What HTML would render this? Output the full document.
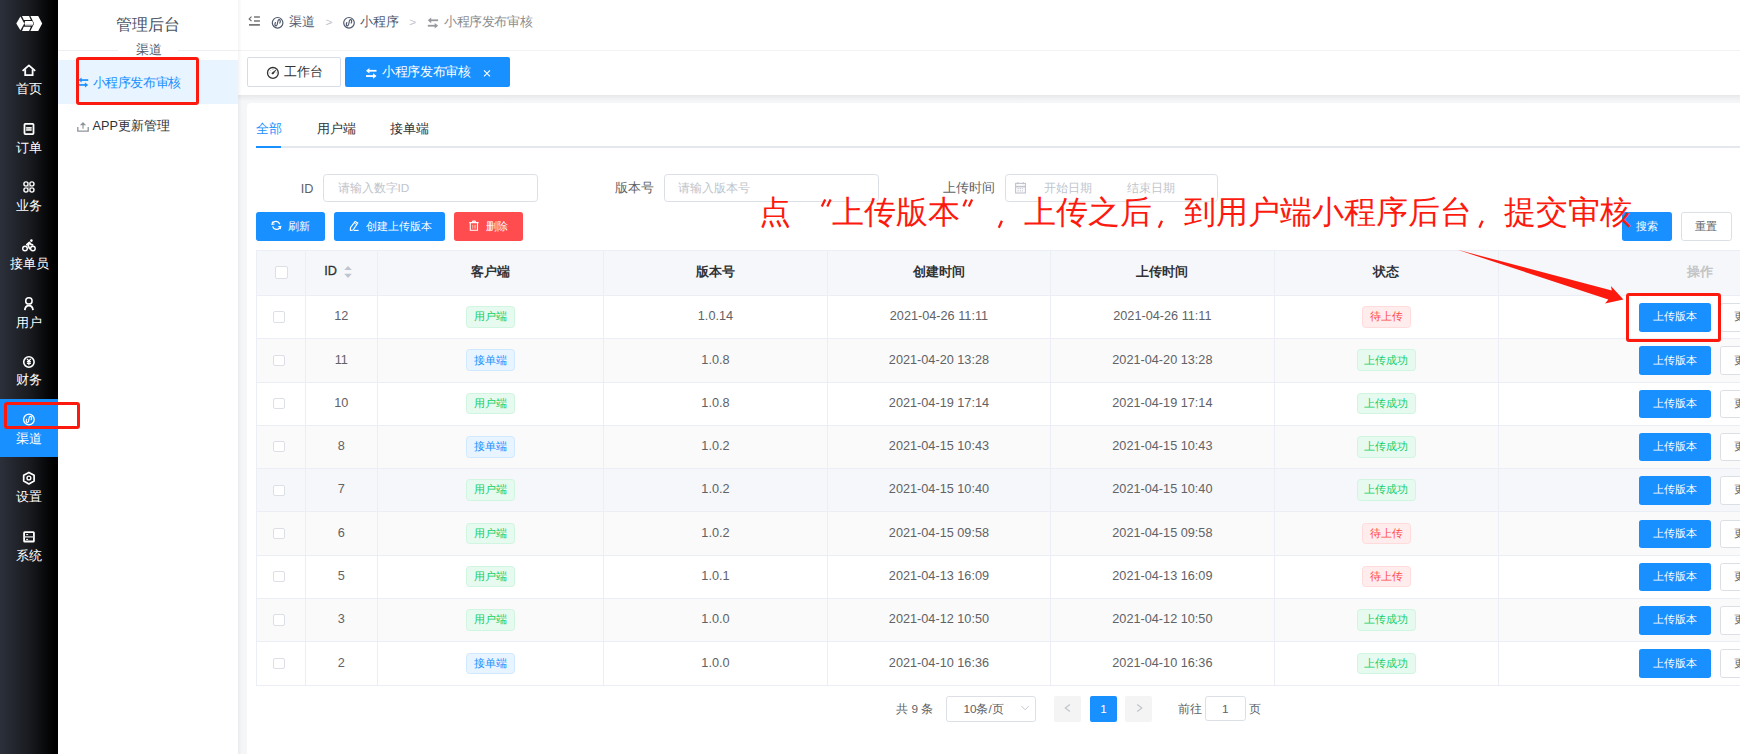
<!DOCTYPE html><html><head><meta charset="utf-8"><style>
html,body{margin:0;padding:0;}
body{width:1740px;height:754px;overflow:hidden;position:relative;background:#f5f6f8;font-family:"Liberation Sans",sans-serif;}
.t{position:absolute;white-space:nowrap;line-height:1;}
.r{position:absolute;box-sizing:border-box;}
.s{position:absolute;overflow:visible;}
</style></head><body>
<div class="r" style="left:238px;top:0px;width:1502px;height:95px;background:#fff;"></div>
<div class="r" style="left:238px;top:50px;width:1502px;height:1px;background:#f3f3f3;"></div>
<div class="r" style="left:238px;top:95px;width:1502px;height:6px;background:linear-gradient(#e6e8ea,#f5f6f8);"></div>
<div class="r" style="left:247px;top:103px;width:1500px;height:660px;background:#fff;border-radius:4px;"></div>
<div class="r" style="left:0px;top:0px;width:58px;height:754px;background:linear-gradient(90deg,#2c303a 0%,#1a1c21 48%,#000 93%,#000 100%);"></div>
<div class="r" style="left:0px;top:399px;width:58px;height:58px;background:#1890ff;"></div>
<svg class="s" style="left:0px;top:0px" width="58" height="50" viewBox="0 0 58 50"><g fill="#fff"><path d="M16.3 23.4 L20.4 16.6 L24.3 23.4 L20.4 30.2 Z"/><path d="M22 15.9 L29.1 15.9 L30.8 20.1 L23.8 20.1 Z"/><path d="M25.1 21.1 L32.3 21.1 L33.4 23.4 L32.3 25.5 L25.1 25.5 L24.6 23.4 Z" fill="#fff"/><path d="M25.3 25 H32.3" stroke="#999" stroke-width="0.8"/><path d="M23.8 26.7 L30.8 26.7 L29.1 30.9 L22 30.9 Z"/><path d="M30.4 15.9 L38.2 15.9 L42.2 23.4 L38.2 30.9 L30.4 30.9 L34.1 23.4 Z"/></g></svg>
<div class="t" style="left:-121px;width:300px;text-align:center;top:82.7px;font-size:12.7px;color:#fff;font-weight:400;">首页</div>
<div class="t" style="left:-121px;width:300px;text-align:center;top:141.89999999999998px;font-size:12.7px;color:#fff;font-weight:400;">订单</div>
<div class="t" style="left:-121px;width:300px;text-align:center;top:200.29999999999998px;font-size:12.7px;color:#fff;font-weight:400;">业务</div>
<div class="t" style="left:-121px;width:300px;text-align:center;top:257.7px;font-size:12.7px;color:#fff;font-weight:400;">接单员</div>
<div class="t" style="left:-121px;width:300px;text-align:center;top:316.7px;font-size:12.7px;color:#fff;font-weight:400;">用户</div>
<div class="t" style="left:-121px;width:300px;text-align:center;top:373.7px;font-size:12.7px;color:#fff;font-weight:400;">财务</div>
<div class="t" style="left:-121px;width:300px;text-align:center;top:432.7px;font-size:12.7px;color:#fff;font-weight:400;">渠道</div>
<div class="t" style="left:-121px;width:300px;text-align:center;top:491.09999999999997px;font-size:12.7px;color:#fff;font-weight:400;">设置</div>
<div class="t" style="left:-121px;width:300px;text-align:center;top:549.7px;font-size:12.7px;color:#fff;font-weight:400;">系统</div>
<svg class="s" style="left:0px;top:50px" width="58" height="520" viewBox="0 50 58 520"><path d="M22.6 70.9 L28.9 65.4 L35.2 70.9" stroke="#fff" fill="none" stroke-width="1.8" stroke-linejoin="round"/><path d="M25.2 69.2 V75.1 H32.6 V69.2" stroke="#fff" fill="none" stroke-width="1.8"/><rect x="24.5" y="123.8" width="9" height="10.3" rx="0.8" stroke="#fff" fill="none" stroke-width="1.8"/><rect x="26.2" y="127.2" width="5.4" height="3.4" fill="#bbb"/><path d="M26.2 127.7 H31.6 M26.2 130.1 H31.6" stroke="#fff" stroke-width="1"/><circle cx="26" cy="184" r="2.1" stroke="#fff" fill="none" stroke-width="1.4"/><circle cx="26" cy="190" r="2.1" stroke="#fff" fill="none" stroke-width="1.4"/><circle cx="31.9" cy="184" r="2.1" stroke="#fff" fill="none" stroke-width="1.4"/><circle cx="31.9" cy="190" r="2.1" stroke="#fff" fill="none" stroke-width="1.4"/><path d="M28.95 183 V191 M25 187 H33" stroke="#999" stroke-width="0.8"/><circle cx="25" cy="248.5" r="2.3" stroke="#fff" fill="none" stroke-width="1.4"/><circle cx="32.9" cy="248.5" r="2.3" stroke="#fff" fill="none" stroke-width="1.4"/><circle cx="31.4" cy="240.6" r="1.3" fill="#fff"/><path d="M26.8 244.6 L29.3 242.4 L31 244.4 L32.6 244.9 M29.3 242.6 L28.2 245.6 L29.6 248.6" stroke="#fff" fill="none" stroke-width="1.7" stroke-linejoin="round" stroke-linecap="round"/><circle cx="28.9" cy="300.9" r="3.2" stroke="#fff" fill="none" stroke-width="1.5"/><path d="M24.8 310.2 C25.1 307 26.9 305.7 28.9 305.7 C30.9 305.7 32.7 307 33 310.2" stroke="#fff" fill="none" stroke-width="1.8"/><circle cx="28.9" cy="362" r="5.2" stroke="#fff" fill="none" stroke-width="1.6"/><path d="M27 358.9 L28.9 361 L30.8 358.9 M26.9 361.6 H30.9 M26.9 363.4 H30.9 M28.9 361 V365.3" stroke="#fff" fill="none" stroke-width="1.2"/><circle cx="28.9" cy="419.5" r="5.3" stroke="#fff" fill="none" stroke-width="1.3"/><path d="M26.70 419.30 C25.70 421.10 26.30 422.80 27.60 422.60 C28.50 422.40 28.70 421.30 28.90 419.50 C29.10 417.70 29.30 416.60 30.20 416.40 C31.50 416.20 32.10 417.90 31.10 419.70" stroke="#fff" fill="none" stroke-width="1.2" stroke-linecap="round"/><path d="M28.9 472.4 L34.1 475.3 L34.1 481.1 L28.9 484 L23.7 481.1 L23.7 475.3 Z" stroke="#fff" fill="none" stroke-width="1.7" stroke-linejoin="round"/><circle cx="28.9" cy="478" r="1.9" stroke="#fff" fill="none" stroke-width="1.4"/><rect x="24.1" y="532.1" width="9.8" height="9.4" rx="0.6" stroke="#fff" fill="none" stroke-width="1.8"/><path d="M24.1 536.9 H33.9" stroke="#ddd" stroke-width="1.3"/><path d="M26.2 534.6 H28.1 M26.2 539.4 H28.1" stroke="#fff" stroke-width="1"/></svg>
<div class="r" style="left:58px;top:0px;width:180px;height:754px;background:#fff;"></div>
<div class="r" style="left:238px;top:0px;width:4px;height:754px;background:linear-gradient(90deg,rgba(0,0,0,0.045),rgba(0,0,0,0));"></div>
<div class="t" style="left:-1.6999999999999886px;width:300px;text-align:center;top:16.3px;font-size:16.3px;color:#4a5262;font-weight:400;">管理后台</div>
<div class="r" style="left:58px;top:50px;width:60px;height:1px;background:#eceef1;"></div>
<div class="r" style="left:178px;top:50px;width:60px;height:1px;background:#eceef1;"></div>
<div class="t" style="left:-1.1999999999999886px;width:300px;text-align:center;top:43.8px;font-size:12.7px;color:#515a6e;font-weight:400;">渠道</div>
<div class="r" style="left:58px;top:60px;width:180px;height:44px;background:#e8f4ff;"></div>
<svg class="s" style="left:58px;top:60px" width="180" height="44" viewBox="58 60 180 44"><path d="M88.2 80.054 H79.60000000000001" stroke="#1890ff" stroke-width="1.7"/><path d="M78.4 80.054 L81.634 77.504 V82.604 Z" fill="#1890ff"/><path d="M78.4 84.95 H87.0" stroke="#1890ff" stroke-width="1.7"/><path d="M88.2 84.95 L84.96600000000001 82.4 V87.5 Z" fill="#1890ff"/></svg>
<div class="t" style="left:92.7px;top:77.0px;font-size:12.7px;color:#1890ff;font-weight:400;letter-spacing:-0.4px;">小程序发布审核</div>
<svg class="s" style="left:70px;top:110px" width="30" height="30" viewBox="70 110 30 30"><path d="M77.8 127 V131.1 H88.2 V127" stroke="#8f939b" fill="none" stroke-width="1.3"/><path d="M83 128.8 V124.8" stroke="#a8abb2" stroke-width="1.5"/><path d="M79.9 125.3 L83 122 L86.1 125.3 Z" fill="#8f939b"/></svg>
<div class="t" style="left:92.6px;top:120.0px;font-size:12.7px;color:#303133;font-weight:400;">APP更新管理</div>
<svg class="s" style="left:244px;top:10px" width="20" height="20" viewBox="244 10 20 20"><path d="M251.5 16.6 L249.2 18.9 L251.5 21.2" stroke="#6a6a6a" fill="none" stroke-width="1.2"/><path d="M254 17 H259.9 M254 21 H259.9 M249 24.9 H259.9" stroke="#777" stroke-width="1.7"/></svg>
<svg class="s" style="left:260px;top:10px" width="100" height="20" viewBox="260 10 100 20"><circle cx="277.6" cy="22.8" r="5.3" stroke="#515a6e" fill="none" stroke-width="1.2"/><path d="M275.40000000000003 22.6 C274.40000000000003 24.400000000000002 275.0 26.1 276.3 25.900000000000002 C277.20000000000005 25.7 277.40000000000003 24.6 277.6 22.8 C277.8 21.0 278.0 19.900000000000002 278.90000000000003 19.7 C280.20000000000005 19.5 280.8 21.2 279.8 23.0" stroke="#515a6e" fill="none" stroke-width="1.2" stroke-linecap="round"/><circle cx="349" cy="22.8" r="5.3" stroke="#515a6e" fill="none" stroke-width="1.2"/><path d="M346.8 22.6 C345.8 24.400000000000002 346.4 26.1 347.7 25.900000000000002 C348.6 25.7 348.8 24.6 349 22.8 C349.2 21.0 349.4 19.900000000000002 350.3 19.7 C351.6 19.5 352.2 21.2 351.2 23.0" stroke="#515a6e" fill="none" stroke-width="1.2" stroke-linecap="round"/></svg>
<div class="t" style="left:288.6px;top:15.6px;font-size:12.7px;color:#515a6e;font-weight:400;">渠道</div>
<div class="t" style="left:325.5px;top:15.5px;font-size:11.78px;color:#c0c4cc;font-weight:400;">&gt;</div>
<div class="t" style="left:360.0px;top:15.6px;font-size:12.7px;color:#515a6e;font-weight:400;">小程序</div>
<div class="t" style="left:409.3px;top:15.5px;font-size:11.78px;color:#c0c4cc;font-weight:400;">&gt;</div>
<svg class="s" style="left:420px;top:10px" width="20" height="25" viewBox="420 10 20 25"><path d="M438.1 20.278 H429.0" stroke="#97999e" stroke-width="1.8"/><path d="M427.8 20.278 L431.199 17.427999999999997 V23.128 Z" fill="#97999e"/><path d="M427.8 25.75 H436.90000000000003" stroke="#97999e" stroke-width="1.8"/><path d="M438.1 25.75 L434.701 22.9 V28.6 Z" fill="#97999e"/></svg>
<div class="t" style="left:443.9px;top:15.6px;font-size:12.7px;color:#8c8c8c;font-weight:400;letter-spacing:-0.35px;">小程序发布审核</div>
<div class="r" style="left:247.2px;top:57.2px;width:93.4px;height:29.6px;background:#fff;border:1px solid #d8dce5;border-radius:2px;"></div>
<svg class="s" style="left:260px;top:60px" width="30" height="30" viewBox="260 60 30 30"><circle cx="272.9" cy="72.9" r="5.4" stroke="#333" fill="none" stroke-width="1.3"/><path d="M272 73.9 L271.9 72.9 L275.9 70 L273.2 74 Z" fill="#333" stroke="#333" stroke-width="0.6" stroke-linejoin="round"/><path d="M269.3 72.9 H270.2 M275.8 72.9 H276.7 M270.3 70.2 L270.9 70.8 M272.9 68.9 V69.8" stroke="#999" stroke-width="0.9"/></svg>
<div class="t" style="left:284.0px;top:65.8px;font-size:12.7px;color:#333;font-weight:400;">工作台</div>
<div class="r" style="left:345.1px;top:57.2px;width:164.9px;height:29.6px;background:#1890ff;border-radius:2px;"></div>
<svg class="s" style="left:360px;top:60px" width="25" height="25" viewBox="360 60 25 25"><path d="M376.5 70.77 H367.2" stroke="#fff" stroke-width="1.8"/><path d="M366 70.77 L369.465 68.02 V73.52 Z" fill="#fff"/><path d="M366 76.05 H375.3" stroke="#fff" stroke-width="1.8"/><path d="M376.5 76.05 L373.035 73.3 V78.8 Z" fill="#fff"/></svg>
<div class="t" style="left:382.2px;top:66.0px;font-size:12.7px;color:#fff;font-weight:400;letter-spacing:-0.35px;">小程序发布审核</div>
<svg class="s" style="left:480px;top:65px" width="15" height="15" viewBox="480 65 15 15"><path d="M484 70.3 L490 76.3 M490 70.3 L484 76.3" stroke="#fff" stroke-width="1.1"/></svg>
<div class="t" style="left:255.5px;top:123.0px;font-size:12.7px;color:#1890ff;font-weight:400;">全部</div>
<div class="t" style="left:316.8px;top:123.0px;font-size:12.7px;color:#303133;font-weight:400;">用户端</div>
<div class="t" style="left:389.5px;top:123.0px;font-size:12.7px;color:#303133;font-weight:400;">接单端</div>
<div class="r" style="left:256px;top:146px;width:1484px;height:2px;background:#e4e7ed;"></div>
<div class="r" style="left:255.8px;top:146px;width:25.4px;height:2px;background:#1890ff;"></div>
<div class="t" style="left:300.8px;top:182.6px;font-size:12.7px;color:#606266;font-weight:400;">ID</div>
<div class="r" style="left:323.3px;top:174.1px;width:214.3px;height:28.3px;background:#fff;border:1px solid #dcdfe6;border-radius:3.6px;"></div>
<div class="t" style="left:337.6px;top:182.3px;font-size:11.78px;color:#c0c4cc;font-weight:400;">请输入数字ID</div>
<div class="t" style="left:615.1px;top:182.0px;font-size:12.7px;color:#606266;font-weight:400;">版本号</div>
<div class="r" style="left:664.3px;top:174.1px;width:214.5px;height:28.3px;background:#fff;border:1px solid #dcdfe6;border-radius:3.6px;"></div>
<div class="t" style="left:678.0px;top:182.3px;font-size:11.78px;color:#c0c4cc;font-weight:400;">请输入版本号</div>
<div class="t" style="left:943.0px;top:182.0px;font-size:12.7px;color:#606266;font-weight:400;">上传时间</div>
<div class="r" style="left:1004.5px;top:174.1px;width:213.9px;height:28.3px;background:#fff;border:1px solid #dcdfe6;border-radius:3.6px;"></div>
<svg class="s" style="left:1010px;top:178px" width="20" height="20" viewBox="1010 178 20 20"><rect x="1015.6" y="183.4" width="9.8" height="9.6" stroke="#c0c4cc" fill="none" stroke-width="1.1"/><path d="M1015.6 186.6 H1025.4" stroke="#c0c4cc" stroke-width="1.6"/><path d="M1017.8 182 V184.3 M1023.2 182 V184.3" stroke="#c0c4cc" stroke-width="1"/><path d="M1017.4 188.7 H1023.8 M1017.4 190.9 H1023.8" stroke="#c0c4cc" stroke-width="1" stroke-dasharray="1.4 0.8"/></svg>
<div class="t" style="left:1043.6px;top:182.3px;font-size:11.78px;color:#c0c4cc;font-weight:400;">开始日期</div>
<div class="t" style="left:1126.6px;top:182.3px;font-size:11.78px;color:#c0c4cc;font-weight:400;">结束日期</div>
<div class="r" style="left:256px;top:212px;width:68.7px;height:29px;background:#1890ff;border-radius:2.7px;"></div>
<svg class="s" style="left:266px;top:216px" width="20" height="20" viewBox="266 216 20 20"><path d="M279.8 224.2 A4.2 4.2 0 0 0 272.3 223.2" stroke="#fff" fill="none" stroke-width="1.3"/><path d="M272.6 221.6 L272 224.4 L274.6 224" stroke="#fff" fill="none" stroke-width="1.1"/><path d="M272.6 226.4 A4.2 4.2 0 0 0 280.2 227.4" stroke="#fff" fill="none" stroke-width="1.3"/><path d="M280.2 229.2 L280.8 226.4 L278.2 226.8" stroke="#fff" fill="none" stroke-width="1.1"/></svg>
<div class="t" style="left:288.4px;top:221.0px;font-size:10.875px;color:#fff;font-weight:400;">刷新</div>
<div class="r" style="left:334.1px;top:212px;width:110.7px;height:29px;background:#1890ff;border-radius:2.7px;"></div>
<svg class="s" style="left:344px;top:216px" width="20" height="20" viewBox="344 216 20 20"><path d="M355.2 221.4 L357.8 222.9 L353.1 230 L350.3 230.4 L350.5 227.6 Z" stroke="#fff" fill="none" stroke-width="1.1" stroke-linejoin="round"/><path d="M354.3 223 L356.9 224.5" stroke="#fff" stroke-width="0.9"/><path d="M353.8 230.4 H358.6" stroke="#fff" stroke-width="1.1"/></svg>
<div class="t" style="left:366.0px;top:221.0px;font-size:10.875px;color:#fff;font-weight:400;">创建上传版本</div>
<div class="r" style="left:454px;top:212px;width:68.8px;height:29px;background:#ff4d4f;border-radius:2.7px;"></div>
<svg class="s" style="left:464px;top:216px" width="20" height="20" viewBox="464 216 20 20"><path d="M469.2 222.6 H478.6 M472.2 222.4 L473 221.2 H475 L475.8 222.4" stroke="#fff" fill="none" stroke-width="1.2"/><path d="M470.3 223 V230.3 H477.5 V223" stroke="#fff" fill="none" stroke-width="1.1"/><path d="M472.6 224.8 V228.6 M474.2 224.8 V228.6 M475.6 224.8 V228.6" stroke="#ffd0b0" stroke-width="0.7"/></svg>
<div class="t" style="left:485.8px;top:221.0px;font-size:10.875px;color:#fff;font-weight:400;">删除</div>
<div class="r" style="left:1622px;top:212px;width:49.8px;height:29px;background:#1890ff;border-radius:2.7px;"></div>
<div class="t" style="left:1635.8px;top:221.0px;font-size:10.875px;color:#fff;font-weight:400;">搜索</div>
<div class="r" style="left:1681.2px;top:212px;width:50.4px;height:29px;background:#fff;border-radius:2.7px;border:1px solid #dcdfe6;"></div>
<div class="t" style="left:1694.9px;top:221.0px;font-size:10.875px;color:#606266;font-weight:400;">重置</div>
<div class="r" style="left:256px;top:250px;width:1484px;height:45.4px;background:#f5f7fa;"></div>
<div class="r" style="left:256px;top:295.4px;width:1484px;height:43.3px;background:#fff;"></div>
<div class="r" style="left:256px;top:338.7px;width:1484px;height:43.3px;background:#fafafa;"></div>
<div class="r" style="left:256px;top:382.0px;width:1484px;height:43.3px;background:#fff;"></div>
<div class="r" style="left:256px;top:425.29999999999995px;width:1484px;height:43.3px;background:#fafafa;"></div>
<div class="r" style="left:256px;top:468.59999999999997px;width:1484px;height:43.3px;background:#f5f7fa;"></div>
<div class="r" style="left:256px;top:511.9px;width:1484px;height:43.3px;background:#fafafa;"></div>
<div class="r" style="left:256px;top:555.1999999999999px;width:1484px;height:43.3px;background:#fff;"></div>
<div class="r" style="left:256px;top:598.5px;width:1484px;height:43.3px;background:#fafafa;"></div>
<div class="r" style="left:256px;top:641.8px;width:1484px;height:43.3px;background:#fff;"></div>
<div class="r" style="left:256px;top:250px;width:1484px;height:1px;background:#ebeef5;"></div>
<div class="r" style="left:256px;top:294.9px;width:1484px;height:1px;background:#ebeef5;"></div>
<div class="r" style="left:256px;top:338.2px;width:1484px;height:1px;background:#ebeef5;"></div>
<div class="r" style="left:256px;top:381.5px;width:1484px;height:1px;background:#ebeef5;"></div>
<div class="r" style="left:256px;top:424.79999999999995px;width:1484px;height:1px;background:#ebeef5;"></div>
<div class="r" style="left:256px;top:468.09999999999997px;width:1484px;height:1px;background:#ebeef5;"></div>
<div class="r" style="left:256px;top:511.4px;width:1484px;height:1px;background:#ebeef5;"></div>
<div class="r" style="left:256px;top:554.6999999999999px;width:1484px;height:1px;background:#ebeef5;"></div>
<div class="r" style="left:256px;top:598.0px;width:1484px;height:1px;background:#ebeef5;"></div>
<div class="r" style="left:256px;top:641.3px;width:1484px;height:1px;background:#ebeef5;"></div>
<div class="r" style="left:256px;top:684.5999999999999px;width:1484px;height:1px;background:#ebeef5;"></div>
<div class="r" style="left:256px;top:250px;width:1px;height:435.0999999999999px;background:#ebeef5;"></div>
<div class="r" style="left:304.9px;top:250px;width:1px;height:435.0999999999999px;background:#ebeef5;"></div>
<div class="r" style="left:376.8px;top:250px;width:1px;height:435.0999999999999px;background:#ebeef5;"></div>
<div class="r" style="left:602.8px;top:250px;width:1px;height:435.0999999999999px;background:#ebeef5;"></div>
<div class="r" style="left:827.1px;top:250px;width:1px;height:435.0999999999999px;background:#ebeef5;"></div>
<div class="r" style="left:1049.8px;top:250px;width:1px;height:435.0999999999999px;background:#ebeef5;"></div>
<div class="r" style="left:1274.0px;top:250px;width:1px;height:435.0999999999999px;background:#ebeef5;"></div>
<div class="r" style="left:1497.8px;top:250px;width:1px;height:435.0999999999999px;background:#ebeef5;"></div>
<div class="r" style="left:275.2px;top:266px;width:12.6px;height:12.5px;background:#fff;border:1px solid #dcdfe6;border-radius:2px;"></div>
<div class="t" style="left:324.3px;top:265.0px;font-size:12.7px;color:#303133;font-weight:400;-webkit-text-stroke:0.3px #303133;">ID</div>
<svg class="s" style="left:340px;top:262px" width="15" height="20" viewBox="340 262 15 20"><path d="M344.2 270.1 L348 266 L351.9 270.1 Z M344.2 273.8 L348 277.9 L351.9 273.8 Z" fill="#c0c4cc"/></svg>
<div class="t" style="left:340.29999999999995px;width:300px;text-align:center;top:265.8px;font-size:12.7px;color:#303133;font-weight:700;">客户端</div>
<div class="t" style="left:565.45px;width:300px;text-align:center;top:265.8px;font-size:12.7px;color:#303133;font-weight:700;">版本号</div>
<div class="t" style="left:788.95px;width:300px;text-align:center;top:265.8px;font-size:12.7px;color:#303133;font-weight:700;">创建时间</div>
<div class="t" style="left:1012.4000000000001px;width:300px;text-align:center;top:265.8px;font-size:12.7px;color:#303133;font-weight:700;">上传时间</div>
<div class="t" style="left:1236.4px;width:300px;text-align:center;top:265.8px;font-size:12.7px;color:#303133;font-weight:700;">状态</div>
<div class="t" style="left:1687.2px;top:266.4px;font-size:12.7px;color:#c4c4c4;font-weight:700;">操作</div>
<div class="r" style="left:273.2px;top:311.29999999999995px;width:12.3px;height:11.3px;background:#fff;border:1px solid #dcdfe6;border-radius:2px;"></div>
<div class="t" style="left:191.35000000000002px;width:300px;text-align:center;top:310.2px;font-size:12.7px;color:#606266;font-weight:400;">12</div>
<div class="r" style="left:465.94999999999993px;top:306.09999999999997px;width:48.7px;height:21.5px;background:#e7faf0;border:1px solid #d0f5e0;border-radius:3.6px;"></div>
<div class="t" style="left:340.29999999999995px;width:300px;text-align:center;top:311.2px;font-size:10.875px;color:#13ce66;font-weight:400;">用户端</div>
<div class="t" style="left:565.45px;width:300px;text-align:center;top:310.2px;font-size:12.7px;color:#606266;font-weight:400;">1.0.14</div>
<div class="t" style="left:788.95px;width:300px;text-align:center;top:310.2px;font-size:12.7px;color:#606266;font-weight:400;">2021-04-26 11:11</div>
<div class="t" style="left:1012.4000000000001px;width:300px;text-align:center;top:310.2px;font-size:12.7px;color:#606266;font-weight:400;">2021-04-26 11:11</div>
<div class="r" style="left:1362.25px;top:306.09999999999997px;width:48.3px;height:21.5px;background:#ffeded;border:1px solid #ffdbdb;border-radius:3.6px;"></div>
<div class="t" style="left:1236.4px;width:300px;text-align:center;top:311.2px;font-size:10.875px;color:#ff4949;font-weight:400;">待上传</div>
<div class="r" style="left:1639.2px;top:303.0px;width:71.5px;height:28.6px;background:#1890ff;border-radius:2.7px;"></div>
<div class="t" style="left:1525px;width:300px;text-align:center;top:311.2px;font-size:10.875px;color:#fff;font-weight:400;">上传版本</div>
<div class="r" style="left:1720.2px;top:303.0px;width:40px;height:28.6px;background:#fff;border-radius:2.7px;border:1px solid #dcdfe6;"></div>
<div class="t" style="left:1733.6px;top:311.2px;font-size:10.875px;color:#606266;font-weight:400;">更新</div>
<div class="r" style="left:273.2px;top:354.59999999999997px;width:12.3px;height:11.3px;background:#fff;border:1px solid #dcdfe6;border-radius:2px;"></div>
<div class="t" style="left:191.35000000000002px;width:300px;text-align:center;top:353.5px;font-size:12.7px;color:#606266;font-weight:400;">11</div>
<div class="r" style="left:465.94999999999993px;top:349.4px;width:48.7px;height:21.5px;background:#e8f4ff;border:1px solid #d1e9ff;border-radius:3.6px;"></div>
<div class="t" style="left:340.29999999999995px;width:300px;text-align:center;top:354.5px;font-size:10.875px;color:#1890ff;font-weight:400;">接单端</div>
<div class="t" style="left:565.45px;width:300px;text-align:center;top:353.5px;font-size:12.7px;color:#606266;font-weight:400;">1.0.8</div>
<div class="t" style="left:788.95px;width:300px;text-align:center;top:353.5px;font-size:12.7px;color:#606266;font-weight:400;">2021-04-20 13:28</div>
<div class="t" style="left:1012.4000000000001px;width:300px;text-align:center;top:353.5px;font-size:12.7px;color:#606266;font-weight:400;">2021-04-20 13:28</div>
<div class="r" style="left:1357.0500000000002px;top:349.4px;width:58.7px;height:21.5px;background:#e7faf0;border:1px solid #d0f5e0;border-radius:3.6px;"></div>
<div class="t" style="left:1236.4px;width:300px;text-align:center;top:354.5px;font-size:10.875px;color:#13ce66;font-weight:400;">上传成功</div>
<div class="r" style="left:1639.2px;top:346.3px;width:71.5px;height:28.6px;background:#1890ff;border-radius:2.7px;"></div>
<div class="t" style="left:1525px;width:300px;text-align:center;top:354.5px;font-size:10.875px;color:#fff;font-weight:400;">上传版本</div>
<div class="r" style="left:1720.2px;top:346.3px;width:40px;height:28.6px;background:#fff;border-radius:2.7px;border:1px solid #dcdfe6;"></div>
<div class="t" style="left:1733.6px;top:354.5px;font-size:10.875px;color:#606266;font-weight:400;">更新</div>
<div class="r" style="left:273.2px;top:397.9px;width:12.3px;height:11.3px;background:#fff;border:1px solid #dcdfe6;border-radius:2px;"></div>
<div class="t" style="left:191.35000000000002px;width:300px;text-align:center;top:396.8px;font-size:12.7px;color:#606266;font-weight:400;">10</div>
<div class="r" style="left:465.94999999999993px;top:392.7px;width:48.7px;height:21.5px;background:#e7faf0;border:1px solid #d0f5e0;border-radius:3.6px;"></div>
<div class="t" style="left:340.29999999999995px;width:300px;text-align:center;top:397.8px;font-size:10.875px;color:#13ce66;font-weight:400;">用户端</div>
<div class="t" style="left:565.45px;width:300px;text-align:center;top:396.8px;font-size:12.7px;color:#606266;font-weight:400;">1.0.8</div>
<div class="t" style="left:788.95px;width:300px;text-align:center;top:396.8px;font-size:12.7px;color:#606266;font-weight:400;">2021-04-19 17:14</div>
<div class="t" style="left:1012.4000000000001px;width:300px;text-align:center;top:396.8px;font-size:12.7px;color:#606266;font-weight:400;">2021-04-19 17:14</div>
<div class="r" style="left:1357.0500000000002px;top:392.7px;width:58.7px;height:21.5px;background:#e7faf0;border:1px solid #d0f5e0;border-radius:3.6px;"></div>
<div class="t" style="left:1236.4px;width:300px;text-align:center;top:397.8px;font-size:10.875px;color:#13ce66;font-weight:400;">上传成功</div>
<div class="r" style="left:1639.2px;top:389.6px;width:71.5px;height:28.6px;background:#1890ff;border-radius:2.7px;"></div>
<div class="t" style="left:1525px;width:300px;text-align:center;top:397.8px;font-size:10.875px;color:#fff;font-weight:400;">上传版本</div>
<div class="r" style="left:1720.2px;top:389.6px;width:40px;height:28.6px;background:#fff;border-radius:2.7px;border:1px solid #dcdfe6;"></div>
<div class="t" style="left:1733.6px;top:397.8px;font-size:10.875px;color:#606266;font-weight:400;">更新</div>
<div class="r" style="left:273.2px;top:441.19999999999993px;width:12.3px;height:11.3px;background:#fff;border:1px solid #dcdfe6;border-radius:2px;"></div>
<div class="t" style="left:191.35000000000002px;width:300px;text-align:center;top:440.09999999999997px;font-size:12.7px;color:#606266;font-weight:400;">8</div>
<div class="r" style="left:465.94999999999993px;top:435.99999999999994px;width:48.7px;height:21.5px;background:#e8f4ff;border:1px solid #d1e9ff;border-radius:3.6px;"></div>
<div class="t" style="left:340.29999999999995px;width:300px;text-align:center;top:441.09999999999997px;font-size:10.875px;color:#1890ff;font-weight:400;">接单端</div>
<div class="t" style="left:565.45px;width:300px;text-align:center;top:440.09999999999997px;font-size:12.7px;color:#606266;font-weight:400;">1.0.2</div>
<div class="t" style="left:788.95px;width:300px;text-align:center;top:440.09999999999997px;font-size:12.7px;color:#606266;font-weight:400;">2021-04-15 10:43</div>
<div class="t" style="left:1012.4000000000001px;width:300px;text-align:center;top:440.09999999999997px;font-size:12.7px;color:#606266;font-weight:400;">2021-04-15 10:43</div>
<div class="r" style="left:1357.0500000000002px;top:435.99999999999994px;width:58.7px;height:21.5px;background:#e7faf0;border:1px solid #d0f5e0;border-radius:3.6px;"></div>
<div class="t" style="left:1236.4px;width:300px;text-align:center;top:441.09999999999997px;font-size:10.875px;color:#13ce66;font-weight:400;">上传成功</div>
<div class="r" style="left:1639.2px;top:432.9px;width:71.5px;height:28.6px;background:#1890ff;border-radius:2.7px;"></div>
<div class="t" style="left:1525px;width:300px;text-align:center;top:441.09999999999997px;font-size:10.875px;color:#fff;font-weight:400;">上传版本</div>
<div class="r" style="left:1720.2px;top:432.9px;width:40px;height:28.6px;background:#fff;border-radius:2.7px;border:1px solid #dcdfe6;"></div>
<div class="t" style="left:1733.6px;top:441.09999999999997px;font-size:10.875px;color:#606266;font-weight:400;">更新</div>
<div class="r" style="left:273.2px;top:484.49999999999994px;width:12.3px;height:11.3px;background:#fff;border:1px solid #dcdfe6;border-radius:2px;"></div>
<div class="t" style="left:191.35000000000002px;width:300px;text-align:center;top:483.4px;font-size:12.7px;color:#606266;font-weight:400;">7</div>
<div class="r" style="left:465.94999999999993px;top:479.29999999999995px;width:48.7px;height:21.5px;background:#e7faf0;border:1px solid #d0f5e0;border-radius:3.6px;"></div>
<div class="t" style="left:340.29999999999995px;width:300px;text-align:center;top:484.4px;font-size:10.875px;color:#13ce66;font-weight:400;">用户端</div>
<div class="t" style="left:565.45px;width:300px;text-align:center;top:483.4px;font-size:12.7px;color:#606266;font-weight:400;">1.0.2</div>
<div class="t" style="left:788.95px;width:300px;text-align:center;top:483.4px;font-size:12.7px;color:#606266;font-weight:400;">2021-04-15 10:40</div>
<div class="t" style="left:1012.4000000000001px;width:300px;text-align:center;top:483.4px;font-size:12.7px;color:#606266;font-weight:400;">2021-04-15 10:40</div>
<div class="r" style="left:1357.0500000000002px;top:479.29999999999995px;width:58.7px;height:21.5px;background:#e7faf0;border:1px solid #d0f5e0;border-radius:3.6px;"></div>
<div class="t" style="left:1236.4px;width:300px;text-align:center;top:484.4px;font-size:10.875px;color:#13ce66;font-weight:400;">上传成功</div>
<div class="r" style="left:1639.2px;top:476.2px;width:71.5px;height:28.6px;background:#1890ff;border-radius:2.7px;"></div>
<div class="t" style="left:1525px;width:300px;text-align:center;top:484.4px;font-size:10.875px;color:#fff;font-weight:400;">上传版本</div>
<div class="r" style="left:1720.2px;top:476.2px;width:40px;height:28.6px;background:#fff;border-radius:2.7px;border:1px solid #dcdfe6;"></div>
<div class="t" style="left:1733.6px;top:484.4px;font-size:10.875px;color:#606266;font-weight:400;">更新</div>
<div class="r" style="left:273.2px;top:527.8px;width:12.3px;height:11.3px;background:#fff;border:1px solid #dcdfe6;border-radius:2px;"></div>
<div class="t" style="left:191.35000000000002px;width:300px;text-align:center;top:526.6999999999999px;font-size:12.7px;color:#606266;font-weight:400;">6</div>
<div class="r" style="left:465.94999999999993px;top:522.6px;width:48.7px;height:21.5px;background:#e7faf0;border:1px solid #d0f5e0;border-radius:3.6px;"></div>
<div class="t" style="left:340.29999999999995px;width:300px;text-align:center;top:527.6999999999999px;font-size:10.875px;color:#13ce66;font-weight:400;">用户端</div>
<div class="t" style="left:565.45px;width:300px;text-align:center;top:526.6999999999999px;font-size:12.7px;color:#606266;font-weight:400;">1.0.2</div>
<div class="t" style="left:788.95px;width:300px;text-align:center;top:526.6999999999999px;font-size:12.7px;color:#606266;font-weight:400;">2021-04-15 09:58</div>
<div class="t" style="left:1012.4000000000001px;width:300px;text-align:center;top:526.6999999999999px;font-size:12.7px;color:#606266;font-weight:400;">2021-04-15 09:58</div>
<div class="r" style="left:1362.25px;top:522.6px;width:48.3px;height:21.5px;background:#ffeded;border:1px solid #ffdbdb;border-radius:3.6px;"></div>
<div class="t" style="left:1236.4px;width:300px;text-align:center;top:527.6999999999999px;font-size:10.875px;color:#ff4949;font-weight:400;">待上传</div>
<div class="r" style="left:1639.2px;top:519.5px;width:71.5px;height:28.6px;background:#1890ff;border-radius:2.7px;"></div>
<div class="t" style="left:1525px;width:300px;text-align:center;top:527.6999999999999px;font-size:10.875px;color:#fff;font-weight:400;">上传版本</div>
<div class="r" style="left:1720.2px;top:519.5px;width:40px;height:28.6px;background:#fff;border-radius:2.7px;border:1px solid #dcdfe6;"></div>
<div class="t" style="left:1733.6px;top:527.6999999999999px;font-size:10.875px;color:#606266;font-weight:400;">更新</div>
<div class="r" style="left:273.2px;top:571.0999999999999px;width:12.3px;height:11.3px;background:#fff;border:1px solid #dcdfe6;border-radius:2px;"></div>
<div class="t" style="left:191.35000000000002px;width:300px;text-align:center;top:569.9999999999999px;font-size:12.7px;color:#606266;font-weight:400;">5</div>
<div class="r" style="left:465.94999999999993px;top:565.9px;width:48.7px;height:21.5px;background:#e7faf0;border:1px solid #d0f5e0;border-radius:3.6px;"></div>
<div class="t" style="left:340.29999999999995px;width:300px;text-align:center;top:570.9999999999999px;font-size:10.875px;color:#13ce66;font-weight:400;">用户端</div>
<div class="t" style="left:565.45px;width:300px;text-align:center;top:569.9999999999999px;font-size:12.7px;color:#606266;font-weight:400;">1.0.1</div>
<div class="t" style="left:788.95px;width:300px;text-align:center;top:569.9999999999999px;font-size:12.7px;color:#606266;font-weight:400;">2021-04-13 16:09</div>
<div class="t" style="left:1012.4000000000001px;width:300px;text-align:center;top:569.9999999999999px;font-size:12.7px;color:#606266;font-weight:400;">2021-04-13 16:09</div>
<div class="r" style="left:1362.25px;top:565.9px;width:48.3px;height:21.5px;background:#ffeded;border:1px solid #ffdbdb;border-radius:3.6px;"></div>
<div class="t" style="left:1236.4px;width:300px;text-align:center;top:570.9999999999999px;font-size:10.875px;color:#ff4949;font-weight:400;">待上传</div>
<div class="r" style="left:1639.2px;top:562.8px;width:71.5px;height:28.6px;background:#1890ff;border-radius:2.7px;"></div>
<div class="t" style="left:1525px;width:300px;text-align:center;top:570.9999999999999px;font-size:10.875px;color:#fff;font-weight:400;">上传版本</div>
<div class="r" style="left:1720.2px;top:562.8px;width:40px;height:28.6px;background:#fff;border-radius:2.7px;border:1px solid #dcdfe6;"></div>
<div class="t" style="left:1733.6px;top:570.9999999999999px;font-size:10.875px;color:#606266;font-weight:400;">更新</div>
<div class="r" style="left:273.2px;top:614.4px;width:12.3px;height:11.3px;background:#fff;border:1px solid #dcdfe6;border-radius:2px;"></div>
<div class="t" style="left:191.35000000000002px;width:300px;text-align:center;top:613.3px;font-size:12.7px;color:#606266;font-weight:400;">3</div>
<div class="r" style="left:465.94999999999993px;top:609.2px;width:48.7px;height:21.5px;background:#e7faf0;border:1px solid #d0f5e0;border-radius:3.6px;"></div>
<div class="t" style="left:340.29999999999995px;width:300px;text-align:center;top:614.3px;font-size:10.875px;color:#13ce66;font-weight:400;">用户端</div>
<div class="t" style="left:565.45px;width:300px;text-align:center;top:613.3px;font-size:12.7px;color:#606266;font-weight:400;">1.0.0</div>
<div class="t" style="left:788.95px;width:300px;text-align:center;top:613.3px;font-size:12.7px;color:#606266;font-weight:400;">2021-04-12 10:50</div>
<div class="t" style="left:1012.4000000000001px;width:300px;text-align:center;top:613.3px;font-size:12.7px;color:#606266;font-weight:400;">2021-04-12 10:50</div>
<div class="r" style="left:1357.0500000000002px;top:609.2px;width:58.7px;height:21.5px;background:#e7faf0;border:1px solid #d0f5e0;border-radius:3.6px;"></div>
<div class="t" style="left:1236.4px;width:300px;text-align:center;top:614.3px;font-size:10.875px;color:#13ce66;font-weight:400;">上传成功</div>
<div class="r" style="left:1639.2px;top:606.1px;width:71.5px;height:28.6px;background:#1890ff;border-radius:2.7px;"></div>
<div class="t" style="left:1525px;width:300px;text-align:center;top:614.3px;font-size:10.875px;color:#fff;font-weight:400;">上传版本</div>
<div class="r" style="left:1720.2px;top:606.1px;width:40px;height:28.6px;background:#fff;border-radius:2.7px;border:1px solid #dcdfe6;"></div>
<div class="t" style="left:1733.6px;top:614.3px;font-size:10.875px;color:#606266;font-weight:400;">更新</div>
<div class="r" style="left:273.2px;top:657.6999999999999px;width:12.3px;height:11.3px;background:#fff;border:1px solid #dcdfe6;border-radius:2px;"></div>
<div class="t" style="left:191.35000000000002px;width:300px;text-align:center;top:656.5999999999999px;font-size:12.7px;color:#606266;font-weight:400;">2</div>
<div class="r" style="left:465.94999999999993px;top:652.5px;width:48.7px;height:21.5px;background:#e8f4ff;border:1px solid #d1e9ff;border-radius:3.6px;"></div>
<div class="t" style="left:340.29999999999995px;width:300px;text-align:center;top:657.5999999999999px;font-size:10.875px;color:#1890ff;font-weight:400;">接单端</div>
<div class="t" style="left:565.45px;width:300px;text-align:center;top:656.5999999999999px;font-size:12.7px;color:#606266;font-weight:400;">1.0.0</div>
<div class="t" style="left:788.95px;width:300px;text-align:center;top:656.5999999999999px;font-size:12.7px;color:#606266;font-weight:400;">2021-04-10 16:36</div>
<div class="t" style="left:1012.4000000000001px;width:300px;text-align:center;top:656.5999999999999px;font-size:12.7px;color:#606266;font-weight:400;">2021-04-10 16:36</div>
<div class="r" style="left:1357.0500000000002px;top:652.5px;width:58.7px;height:21.5px;background:#e7faf0;border:1px solid #d0f5e0;border-radius:3.6px;"></div>
<div class="t" style="left:1236.4px;width:300px;text-align:center;top:657.5999999999999px;font-size:10.875px;color:#13ce66;font-weight:400;">上传成功</div>
<div class="r" style="left:1639.2px;top:649.4px;width:71.5px;height:28.6px;background:#1890ff;border-radius:2.7px;"></div>
<div class="t" style="left:1525px;width:300px;text-align:center;top:657.5999999999999px;font-size:10.875px;color:#fff;font-weight:400;">上传版本</div>
<div class="r" style="left:1720.2px;top:649.4px;width:40px;height:28.6px;background:#fff;border-radius:2.7px;border:1px solid #dcdfe6;"></div>
<div class="t" style="left:1733.6px;top:657.5999999999999px;font-size:10.875px;color:#606266;font-weight:400;">更新</div>
<div class="t" style="left:896.2px;top:702.5px;font-size:11.78px;color:#606266;font-weight:400;">共 9 条</div>
<div class="r" style="left:946.2px;top:696.2px;width:89.5px;height:25.4px;background:#fff;border:1px solid #dcdfe6;border-radius:2.7px;"></div>
<div class="t" style="left:963.4px;top:702.5px;font-size:11.78px;color:#606266;font-weight:400;">10条/页</div>
<svg class="s" style="left:1015px;top:700px" width="20" height="15" viewBox="1015 700 20 15"><path d="M1021.4 706 L1025.1 709.8 L1028.8 706" stroke="#c0c4cc" fill="none" stroke-width="0.9"/></svg>
<div class="r" style="left:1054px;top:696px;width:27px;height:25.7px;background:#f4f4f5;border-radius:2px;"></div>
<svg class="s" style="left:1060px;top:700px" width="15" height="15" viewBox="1060 700 15 15"><path d="M1069.9 704.5 L1065.3 708 L1069.9 711.5" stroke="#c0c4cc" fill="none" stroke-width="1.2"/></svg>
<div class="r" style="left:1090px;top:696px;width:27px;height:25.7px;background:#1890ff;border-radius:2px;"></div>
<div class="t" style="left:953.5px;width:300px;text-align:center;top:703.3px;font-size:11.78px;color:#fff;font-weight:400;">1</div>
<div class="r" style="left:1125px;top:696px;width:26.8px;height:25.7px;background:#f4f4f5;border-radius:2px;"></div>
<svg class="s" style="left:1130px;top:700px" width="15" height="15" viewBox="1130 700 15 15"><path d="M1137.2 704.5 L1141.8 708 L1137.2 711.5" stroke="#c0c4cc" fill="none" stroke-width="1.2"/></svg>
<div class="t" style="left:1177.8px;top:702.5px;font-size:11.78px;color:#606266;font-weight:400;">前往</div>
<div class="r" style="left:1205.3px;top:696.2px;width:40.3px;height:25.3px;background:#fff;border:1px solid #dcdfe6;border-radius:2.7px;"></div>
<div class="t" style="left:1075.4px;width:300px;text-align:center;top:703.3px;font-size:11.78px;color:#606266;font-weight:400;">1</div>
<div class="t" style="left:1249.2px;top:702.5px;font-size:11.78px;color:#606266;font-weight:400;">页</div>
<div class="r" style="left:76.2px;top:57.2px;width:122.6px;height:48.1px;border:3px solid #fc1a0f;border-radius:3px;"></div>
<div class="r" style="left:4.3px;top:402.4px;width:75.8px;height:26.4px;border:3px solid #fc1a0f;border-radius:3px;"></div>
<div class="r" style="left:1626.4px;top:293.1px;width:94.3px;height:48.9px;border:3px solid #fc1a0f;border-radius:3px;"></div>
<svg class="s" style="left:1440px;top:240px" width="200" height="70" viewBox="1440 240 200 70"><path d="M1457.6 249.8 L1611.8 290.5 L1610.9 286.1 L1623.4 299.4 L1605.1 303.5 L1608.3 299.4 Z" fill="#fc1a0f"/></svg>
<div class="t" style="left:759.2px;top:196.0px;font-size:32px;color:#fc1a0f;font-weight:400;">点</div>
<div class="t" style="left:831.6px;top:196.0px;font-size:32px;color:#fc1a0f;font-weight:400;">上传版本</div>
<div class="t" style="left:1023.6px;top:196.0px;font-size:32px;color:#fc1a0f;font-weight:400;">上传之后</div>
<div class="t" style="left:1183.6px;top:196.0px;font-size:32px;color:#fc1a0f;font-weight:400;">到用户端小程序后台</div>
<div class="t" style="left:1503.6px;top:196.0px;font-size:32px;color:#fc1a0f;font-weight:400;">提交审核</div>
<svg class="s" style="left:800px;top:190px" width="700" height="50" viewBox="800 190 700 50"><path d="M825.2 199.6 L821.8 206.4" stroke="#fc1a0f" stroke-width="2.3" stroke-linecap="butt"/><path d="M830.6 199.6 L827.3 206.4" stroke="#fc1a0f" stroke-width="2.3" stroke-linecap="butt"/><path d="M966.4 199.6 L963.4 206.4" stroke="#fc1a0f" stroke-width="2.3" stroke-linecap="butt"/><path d="M972.1 199.6 L968.8 206.4" stroke="#fc1a0f" stroke-width="2.3" stroke-linecap="butt"/><path d="M1001.9 220.8 L998.8 227.8" stroke="#fc1a0f" stroke-width="2.3"/><path d="M1162.0 220.8 L1158.8 227.8" stroke="#fc1a0f" stroke-width="2.3"/><path d="M1482.6 220.8 L1479.4 227.8" stroke="#fc1a0f" stroke-width="2.3"/></svg>
</body></html>
